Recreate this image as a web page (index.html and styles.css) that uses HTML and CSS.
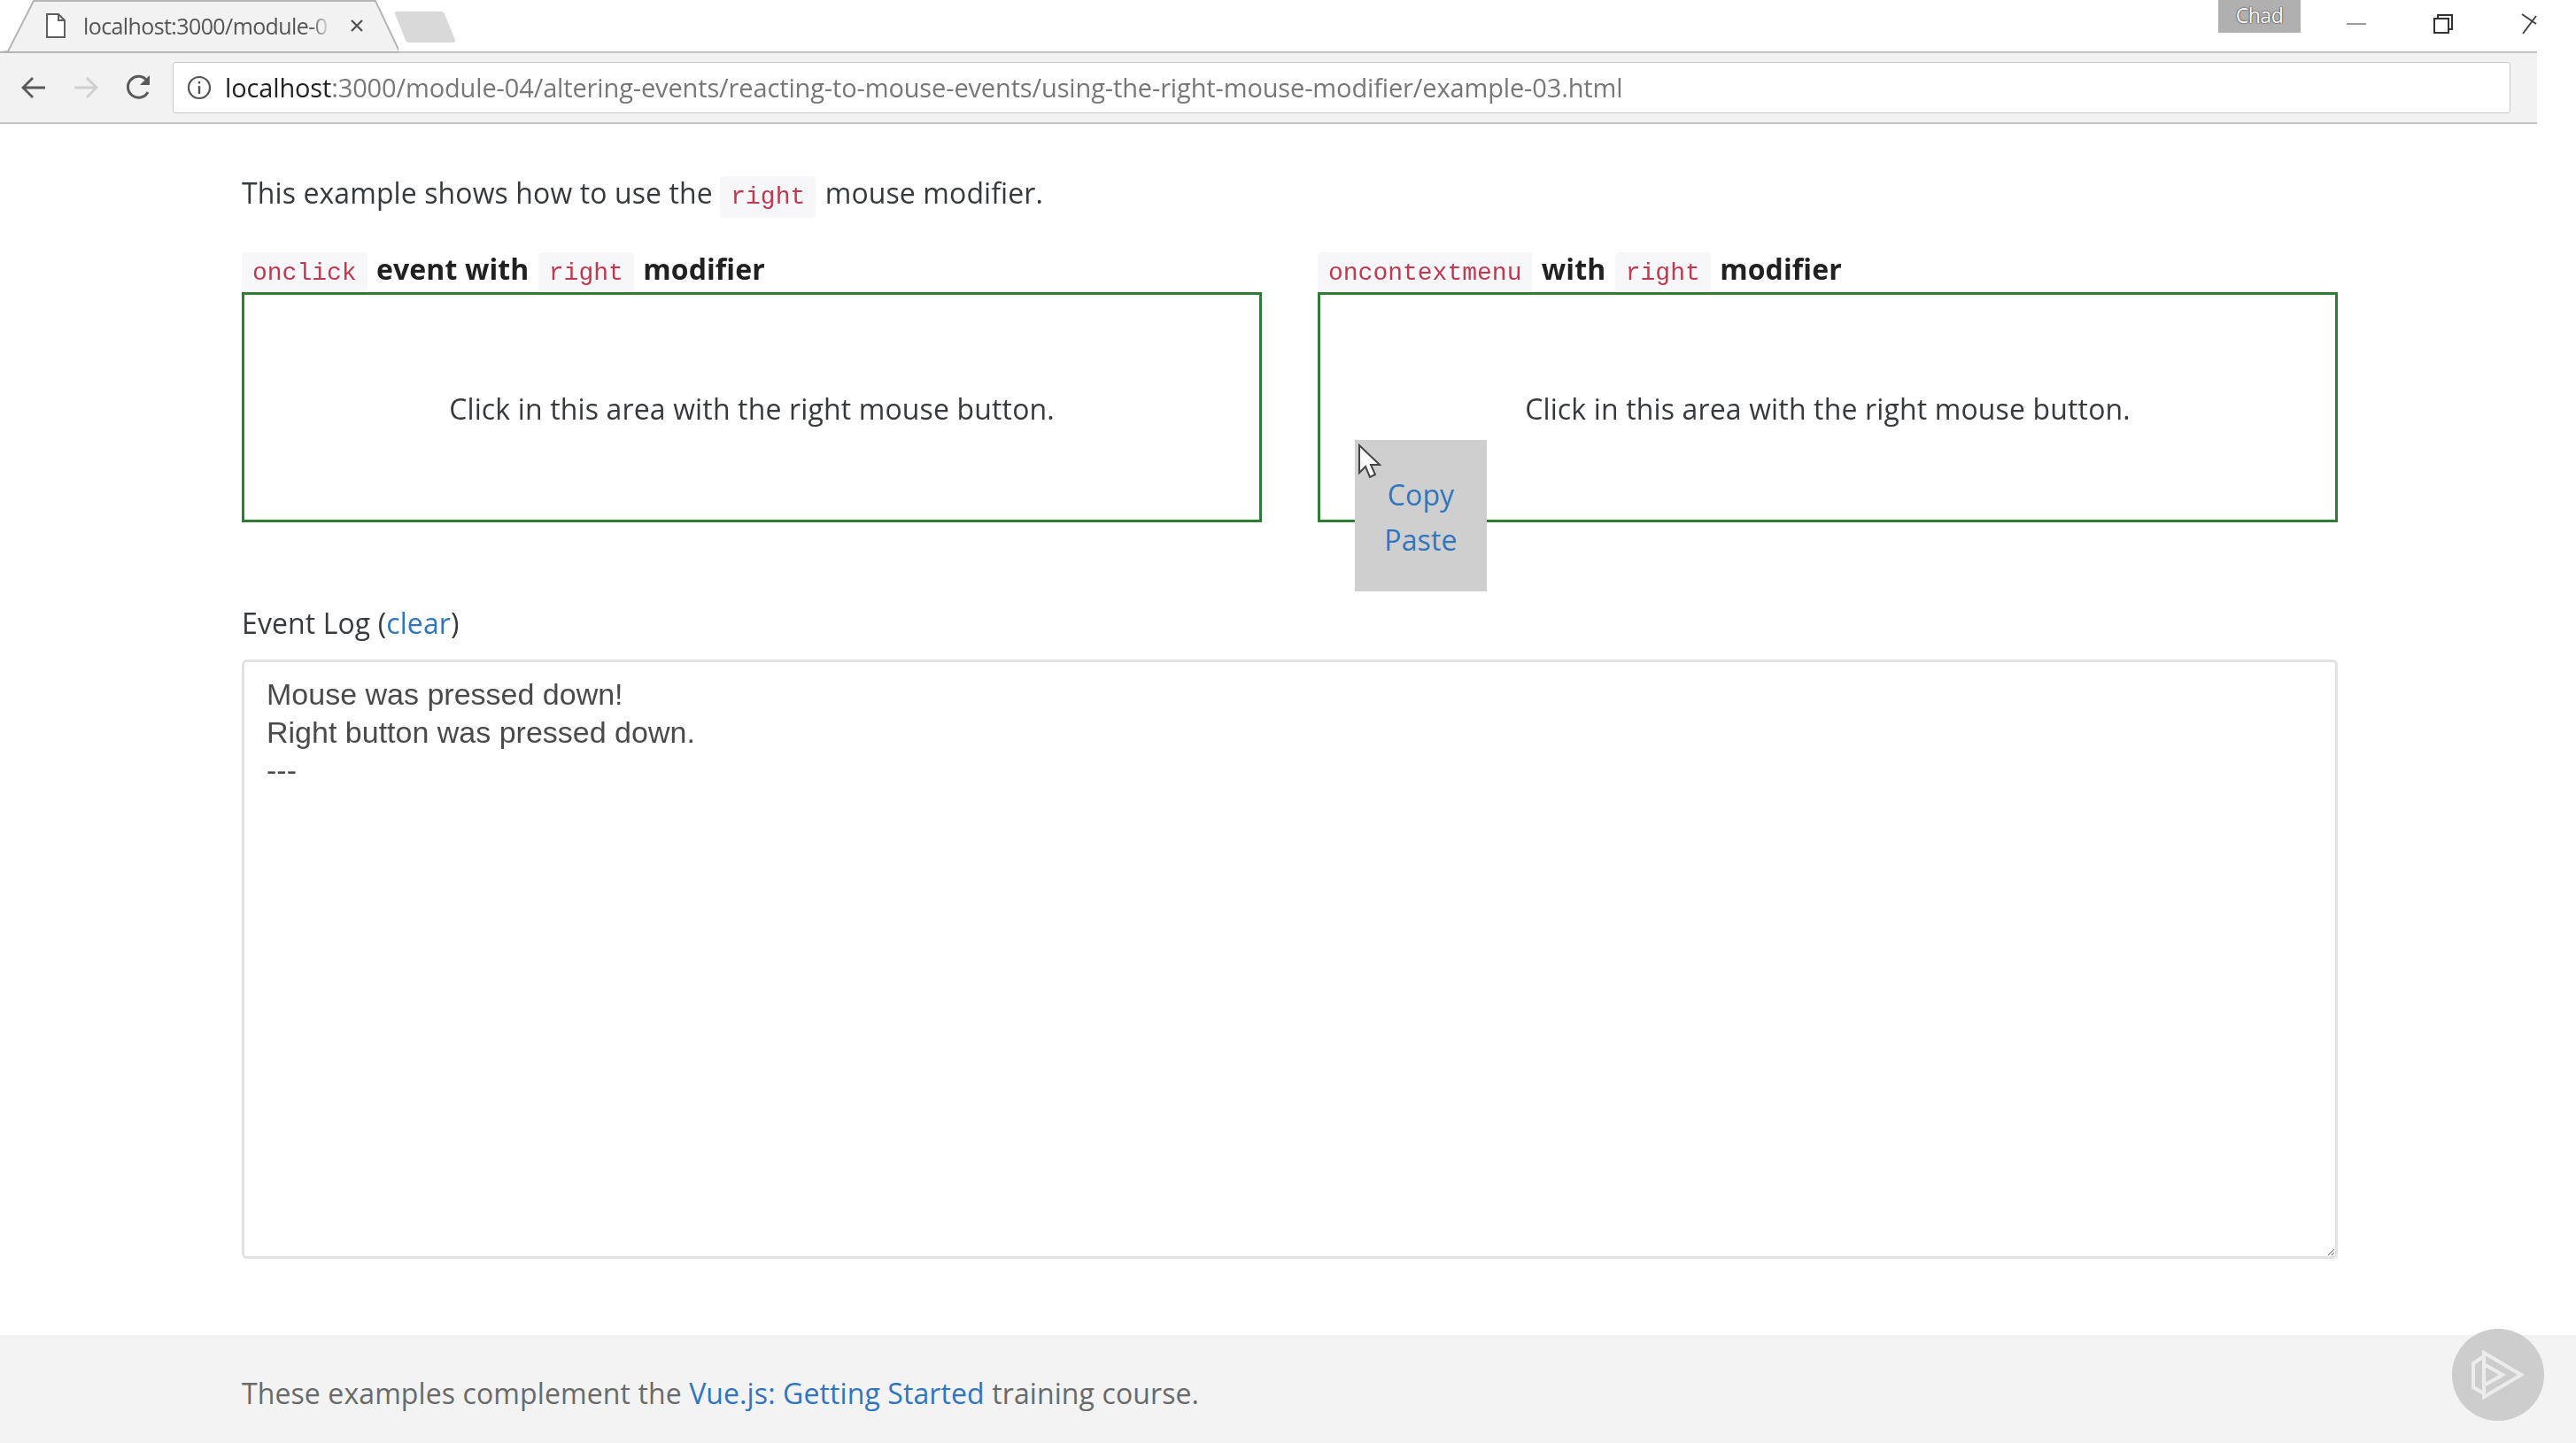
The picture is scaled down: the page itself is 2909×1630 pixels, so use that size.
FILE: index.html
```html
<!DOCTYPE html>
<html lang="en">
<head>
  <meta charset="UTF-8" />
  <title>Using the right mouse modifier</title>
  <link rel="stylesheet" href="styles.css">
</head>
<body>
  <!-- Browser chrome -->
  <header class="browser">
    <div class="tabstrip">
      <div class="tab">
        <svg class="tab-shape" width="450" height="60" viewBox="0 0 450 60"><path d="M0 59 L9 58 L38 1 H424 L451 58 L450 59 Z" fill="#f2f2f2" stroke="#b5b5b5" stroke-width="2"/></svg>
        <svg class="tab-icon" width="24" height="30" viewBox="0 0 24 30"><path d="M2 2 H15 L22 9 V28 H2 Z M15 2 V9 H22" fill="#fff" stroke="#5f5f5f" stroke-width="2"/></svg>
        <span class="tab-title">localhost:3000/module-0</span>
        <svg class="tab-close" width="16" height="16" viewBox="0 0 16 16"><path d="M2 2 L14 14 M14 2 L2 14" stroke="#555" stroke-width="2.4"/></svg>
      </div>
      <div class="newtab"></div>
      <div class="user">Chad</div>
      <div class="winctl">
        <svg class="win-min" width="24" height="24" viewBox="0 0 24 24"><path d="M1 12 H23" stroke="#9a9a9a" stroke-width="2"/></svg>
        <svg width="24" height="24" viewBox="0 0 24 24"><path d="M6 5 V2 H22 V18 H18 M2 6 H18 V22 H2 Z" fill="#fff" stroke="#333" stroke-width="2"/></svg>
        <svg width="18" height="24" viewBox="0 0 18 24"><path d="M1 1 L17 12 M17 3 L2 23" stroke="#444" stroke-width="2"/></svg>
      </div>
    </div>
    <div class="toolbar">
      <svg class="nav-btn" width="28" height="28" viewBox="0 0 28 28"><path d="M27 14 H3 M13 3 L2 14 L13 25" fill="none" stroke="#5a5a5a" stroke-width="2.8"/></svg>
      <svg class="nav-btn" width="28" height="28" viewBox="0 0 28 28"><path d="M1 14 H25 M15 3 L26 14 L15 25" fill="none" stroke="#cfcfcf" stroke-width="2.8"/></svg>
      <svg class="nav-btn" width="30" height="30" viewBox="0 0 30 30"><path d="M25 20 A12 12 0 1 1 24 7" fill="none" stroke="#5a5a5a" stroke-width="3"/><path d="M27 1 V12 H16 Z" fill="#5a5a5a"/></svg>
      <div class="address">
        <svg width="28" height="28" viewBox="0 0 28 28"><circle cx="14" cy="14" r="12" fill="none" stroke="#555" stroke-width="2.2"/><path d="M14 12 V21 M14 7 V9.6" stroke="#555" stroke-width="2.4"/></svg>
        <span class="url"><span class="host">localhost</span>:3000/module-04/altering-events/reacting-to-mouse-events/using-the-right-mouse-modifier/example-03.html</span>
      </div>
    </div>
  </header>

  <main class="page">
    <p class="intro">This example shows how to use the <code>right</code> mouse modifier.</p>

    <div class="areas">
      <section>
        <h4><code>onclick</code> event with <code>right</code> modifier</h4>
        <div class="area">Click in this area with the right mouse button.</div>
      </section>
      <section>
        <h4><code>oncontextmenu</code> with <code>right</code> modifier</h4>
        <div class="area">
          Click in this area with the right mouse button.
          <!-- Context menu opened under the pointer -->
          <ul class="context-menu">
            <li><a href="#">Copy</a></li>
            <li><a href="#">Paste</a></li>
          </ul>
          <svg class="pointer" width="28" height="42" viewBox="0 0 28 42"><path d="M2 2 V33 L9 26 L14 38 L20 35 L15 24 L25 24 Z" fill="#fff" stroke="#444" stroke-width="2"/></svg>
        </div>
      </section>
    </div>

    <p class="log-label">Event Log (<a href="#">clear</a>)</p>
    <textarea class="log" readonly>Mouse was pressed down!
Right button was pressed down.
---</textarea>
  </main>

  <footer class="footer">
    <p>These examples complement the <a href="#">Vue.js: Getting Started</a> training course.</p>
  </footer>

  <!-- Video player badge -->
  <div class="badge">
    <svg width="60" height="56" viewBox="0 0 60 56"><path d="M14 7 V49 L2 42 V15 Z M14 3 L56 28 L14 53 Z M14 16 V40 L35 28 Z" fill="none" stroke="#ececec" stroke-width="4"/></svg>
  </div>
</body>
</html>
```

FILE: styles.css
```css
/* Global Styles */
html, body {
  margin: 0;
  height: 1630px;
  overflow: hidden;
}

body {
  display: flex;
  flex-direction: column;
  font-family: "Open Sans", "Noto Sans", sans-serif;
  font-size: 32px;
  letter-spacing: 0.1px;
  color: #373a3c;
  background: #fff;
  position: relative;
  filter: blur(0.6px);
}

a {
  color: #2f76bf;
  text-decoration: none;
}

/* Browser chrome */
.browser {
  width: 2865px;
}

.tabstrip {
  height: 58px;
  display: flex;
  align-items: flex-start;
  position: relative;
}

.tab {
  width: 451px;
  height: 58px;
  display: flex;
  align-items: center;
  position: relative;
  padding-left: 51px;
  box-sizing: border-box;
  flex: none;
}

.tab-shape {
  position: absolute;
  left: 0;
  top: 0;
}

.tab-icon, .tab-title, .tab-close {
  position: relative;
}

.tab-title {
  width: 280px;
  margin-left: 19px;
  overflow: hidden;
  white-space: nowrap;
  font-size: 25px;
  letter-spacing: -0.6px;
  color: #555;
  -webkit-mask-image: linear-gradient(to right, #000 92%, transparent);
  mask-image: linear-gradient(to right, #000 92%, transparent);
}

.tab-close {
  margin-left: 21px;
}

.newtab {
  width: 56px;
  height: 35px;
  margin: 13px 0 0 1px;
  background: #d9d9d9;
  transform: skewX(22deg);
  border-radius: 3px;
  flex: none;
}

.user {
  margin-left: auto;
  margin-right: 267px;
  width: 93px;
  height: 37px;
  background: #b0b0b0;
  color: #fff;
  font-size: 23px;
  letter-spacing: -0.5px;
  text-align: center;
  line-height: 34px;
  text-shadow: 0 0 2px #333, 0 0 1px #333;
}

.winctl {
  position: absolute;
  right: 0;
  top: 15px;
  display: flex;
  gap: 76px;
}

.win-min {
  margin-right: -2px;
}

.toolbar {
  height: 78px;
  background: #f2f2f2;
  border-top: 2px solid #c4c4c4;
  border-bottom: 2px solid #c4c4c4;
  display: flex;
  align-items: center;
  padding-left: 24px;
  padding-right: 30px;
}

.nav-btn {
  margin-right: 31px;
  flex: none;
}

.address {
  flex: 1;
  height: 56px;
  margin-left: -8px;
  background: #fff;
  border: 1px solid #c9c9c9;
  border-radius: 3px;
  display: flex;
  align-items: center;
  padding-left: 15px;
  gap: 15px;
}

.url {
  font-size: 29px;
  letter-spacing: -0.14px;
  color: #777;
  white-space: nowrap;
  margin-bottom: 2px;
}

.host {
  color: #222;
}

/* Page content */
.page {
  flex: 1;
  padding: 0 269px 0 273px;
}

.intro {
  margin: 0;
  padding-top: 54px;
  height: 130px;
  box-sizing: border-box;
  line-height: 48px;
}

.intro code {
  margin: 0 2px 0 0;
}

code {
  font-family: "Liberation Mono", monospace;
  font-size: 28px;
  font-weight: 400;
  letter-spacing: 0;
  color: #c0394f;
  background: #f7f7f9;
  padding: 8px 12px;
  border-radius: 4px;
  margin: 0 2px;
}

h4 code:first-child {
  margin-left: 0;
}

.areas {
  display: grid;
  grid-template-columns: 1152px 1152px;
  gap: 63px;
}

h4 {
  margin: 0;
  height: 60px;
  padding-top: 10px;
  box-sizing: border-box;
  line-height: 48px;
  font-weight: 700;
  letter-spacing: 0.1px;
  color: #212121;
}

.area {
  height: 260px;
  padding-top: 2px;
  border: 3px solid #2f7d35;
  box-sizing: border-box;
  display: flex;
  align-items: center;
  justify-content: center;
  letter-spacing: 0.14px;
  position: relative;
}

.context-menu {
  position: absolute;
  left: 39px;
  top: 164px;
  width: 149px;
  height: 171px;
  margin: 0;
  padding: 36px 0 0;
  box-sizing: border-box;
  list-style: none;
  background: #cfcfcf;
  text-align: center;
  line-height: 51px;
}

.pointer {
  position: absolute;
  left: 42px;
  top: 168px;
}

.log-label {
  margin: 90px 0 0;
  line-height: 48px;
}

.log {
  display: block;
  width: 100%;
  height: 677px;
  margin-top: 17px;
  padding: 15px 25px;
  box-sizing: border-box;
  border: 3px solid #e2e2e2;
  border-radius: 6px;
  font-family: "Liberation Sans", Arial, sans-serif;
  font-size: 34px;
  letter-spacing: 0;
  line-height: 43px;
  color: #4a4a4a;
  outline: none;
}

/* Footer */
.footer {
  height: 122px;
  background: #f3f3f3;
  padding: 0 273px;
  display: flex;
  align-items: center;
  color: #6a6a6a;
}

.footer p {
  margin: 8px 0 0;
}

.badge {
  position: absolute;
  left: 2769px;
  top: 1501px;
  width: 104px;
  height: 104px;
  border-radius: 50%;
  background: #cdcdcd;
  display: flex;
  align-items: center;
  justify-content: center;
}
```
